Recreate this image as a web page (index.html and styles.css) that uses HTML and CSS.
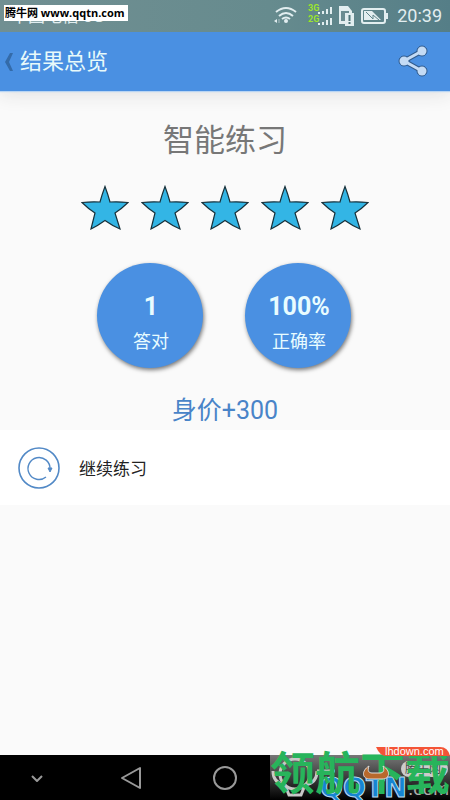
FILE: index.html
```html
<!DOCTYPE html>
<html lang="zh-CN">
<head>
<meta charset="utf-8">
<meta name="viewport" content="width=device-width, initial-scale=1">
<title>结果总览</title>
<link rel="stylesheet" href="styles.css">
</head>
<body>
<div class="status">
  <span class="carrier">中国电信 3G</span>
  <span class="site-tag">腾牛网 www.qqtn.com</span>
  <svg class="signals" width="120" height="32" viewBox="0 0 120 32" aria-hidden="true">
    <g fill="none" stroke="#e2eef0" stroke-width="2">
      <path d="M7 12Q17 4 27 12M10 16Q17 10 24 16M13 19Q17 16 21 19"/>
    </g>
    <circle cx="17" cy="21" r="2" fill="#e2eef0"/>
    <path d="M5 21l3-2v4z" fill="#e2eef0"/>
    <path d="M10 19v4" stroke="#a9bfc2"/>
    <g class="net"><text x="39" y="11">3G</text><text x="39" y="22">2G</text></g>
    <path d="M50 14v-2M54 14v-3M58 14V9M62 14V7M50 25v-2M54 25v-3M58 25v-5M62 25v-7" stroke="#e2eef0" stroke-width="2"/>
    <path d="M70 6h9l4 5v13H70z" fill="#e2eef0"/>
    <path d="M72 11h8v2h-4v8h-4z" fill="#6b8d92"/>
    <path d="M76 13h9v13h-9z" fill="#e2eef0"/>
    <path d="M80.500 15v6M80.500 22v2" stroke="#4f767b" stroke-width="2"/>
    <rect x="93" y="9" width="23" height="14" rx="2" fill="none" stroke="#e2eef0" stroke-width="2"/>
    <path d="M118 13v6" stroke="#e2eef0" stroke-width="2"/>
    <path d="M95 11h8l9 9H95z" fill="#e2eef0"/>
    <path d="M97 12l7 7v-4l6 5" fill="none" stroke="#5f858a"/>
  </svg>
  <span class="clock">20:39</span>
</div>
<header class="bar">
  <button class="back" type="button" aria-label="返回">
    <svg width="10" height="20" viewBox="0 0 10 20"><path d="M8 1H5L0 10l5 9h3L4 10z" fill="#346ba9"/></svg>
  </button>
  <h1>结果总览</h1>
  <button class="share" type="button" aria-label="分享">
    <svg width="32" height="34" viewBox="0 0 32 34">
      <g stroke="#315b8c" fill="#315b8c"><path d="M25 6L7 16l18 10" fill="none" stroke-width="5"/><circle cx="25" cy="6" r="5"/><circle cx="7" cy="16" r="5"/><circle cx="25" cy="26" r="5"/></g>
      <g fill="#c4dbf5"><path d="M25 6L7 16l18 10" fill="none" stroke="#c4dbf5" stroke-width="3"/><circle cx="25" cy="6" r="4.500"/><circle cx="7" cy="16" r="4.500"/><circle cx="25" cy="26" r="4.500"/></g>
    </svg>
  </button>
</header>
<main>
  <h2>智能练习</h2>
  <svg width="0" height="0" class="defs" aria-hidden="true"><symbol id="star" viewBox="0 0 48 45"><path d="M24 1Q27 9 29 16.500Q38 16 47 17Q41 23 34 27.500L39 43.500Q31 40 24 35Q17 40 10 43.500L14 27.500Q7 23 1 17Q10 16 19 16.500Q21 9 24 1Z" fill="#33b5e5" stroke="#17313b" stroke-width="1.200"/></symbol></svg>
  <div class="stars" role="img" aria-label="五星">
    <svg><use href="#star"/></svg><svg><use href="#star"/></svg><svg><use href="#star"/></svg><svg><use href="#star"/></svg><svg><use href="#star"/></svg>
  </div>
  <div class="scores">
    <div class="score"><strong>1</strong><span>答对</span></div>
    <div class="score"><strong>100%</strong><span>正确率</span></div>
  </div>
  <p class="worth">身价+300</p>
  <button class="again" type="button">
    <svg width="44" height="44" viewBox="0 0 44 44" fill="none" stroke="#5289c6" aria-hidden="true">
      <circle cx="22" cy="22" r="20" stroke-width="1.600"/>
      <path d="M29 31A11 11 0 1 1 33 23" stroke-width="1.400"/>
      <path d="M31 22h4l-2 4z" fill="#5289c6" stroke-width="1"/>
    </svg>
    <span>继续练习</span>
  </button>
</main>
<footer>
  <nav>
    <button type="button" aria-label="收起"><svg width="24" height="24" viewBox="0 0 24 24"><path d="M7 10l5 5 5-5" stroke-width="2"/></svg></button>
    <button type="button" aria-label="返回"><svg width="24" height="26" viewBox="0 0 24 26"><path d="M21 3v20L3 13z"/></svg></button>
    <button type="button" aria-label="主页"><svg width="26" height="26" viewBox="0 0 26 26"><circle cx="13" cy="13" r="11"/></svg></button>
  </nav>
  <div class="watermark">
    <svg width="180" height="56" viewBox="0 0 180 56">
      <defs><linearGradient id="shade" x2="0" y2="1"><stop stop-color="#777"/><stop offset="1" stop-color="#000"/></linearGradient></defs>
      <path d="M0 11h180v45H0z" fill="url(#shade)"/>
      <g fill="none" stroke="#c8c8c8" stroke-width="3"><circle cx="25" cy="30" r="15"/><path d="M3 27q0 12 12 14l4 10h12l4-10q12-2 12-14M47 27h18"/></g>
      <rect x="131" y="17" width="47" height="16" rx="8" fill="#ccc"/>
      <text class="tag-name" x="135" y="29">腾牛网</text>
      <text class="logo" x="50" y="53">QQTN</text>
      <text class="dotcom" x="138" y="51">.com</text>
      <text class="mark" x="0" y="46">领航下载</text>
      <path d="M99 22c-8 5-7 13 1 13h12c8 0 9-8 1-13 2 5 0 7-3 7h-8c-3 0-5-2-3-7z" fill="#b8692c" stroke="#ddd"/>
      <path d="M106 3h64q8 0 10 9h-64q-6 0-10-9z" fill="#f45436"/>
      <text class="url" x="115" y="11">lhdown.com</text>
    </svg>
  </div>
</footer>
</body>
</html>
```

FILE: styles.css
```css
* { box-sizing: border-box; }
body {
  margin: 0;
  min-height: 100vh;
  display: flex;
  flex-direction: column;
  background: #fafafa;
  font-family: Roboto, "Noto Sans CJK SC", sans-serif;
}
button {
  border: 0;
  padding: 0;
  background: none;
  font: inherit;
  color: inherit;
}
svg { display: block; flex: none; }
h1, h2, p { margin: 0; font-weight: 400; }
.status {
  position: relative;
  height: 32px;
  display: flex;
  align-items: center;
  justify-content: flex-end;
  gap: 8px;
  padding-right: 8px;
  overflow: hidden;
  background: linear-gradient(90deg, #718f92, #668b8e 60%, #557e87);
  color: #e2eef0;
}
.carrier {
  position: absolute;
  left: 11px;
  top: 7px;
  font-size: 17px;
  line-height: 18px;
}
.site-tag {
  position: absolute;
  left: 4px;
  top: 5px;
  padding: 0 3px 0 1px;
  background: #fff;
  color: #000;
  font: 700 11px/16px "Open Sans", "Noto Sans CJK SC", sans-serif;
}
.net text { fill: #9be52d; font: 700 9px Roboto, sans-serif; }
.clock { font-size: 18px; line-height: 32px; }
.bar {
  height: 59px;
  display: flex;
  align-items: center;
  padding: 0 21px 0 5px;
  background: #4a90e2;
  color: #e8fafa;
  box-shadow: 0 1px 1px #b9d5f3, 0 2px 20px #ddd;
}
.back { width: 15px; }
.bar h1 { flex: 1; font-size: 22px; line-height: 32px; }
main { flex: 1; }
h2 {
  padding-top: 28px;
  color: #777;
  font-size: 31px;
  line-height: 44px;
  text-align: center;
}
.defs { position: absolute; }
.stars {
  display: flex;
  justify-content: center;
  gap: 12px;
  margin-top: 22px;
}
.stars svg { width: 48px; height: 46px; }
.scores {
  display: flex;
  justify-content: center;
  gap: 42px;
  margin-top: 32px;
  padding-right: 2px;
}
.score {
  width: 106px;
  height: 105px;
  display: flex;
  flex-direction: column;
  align-items: center;
  padding: 28px 0 0 2px;
  gap: 6px;
  border-radius: 50%;
  background: #4a90e2;
  color: #e8fcff;
  box-shadow: 1px 2px 4px #777;
}
.score strong { font-size: 25px; line-height: 32px; }
.score span { font-size: 18px; line-height: 26px; }
.worth {
  margin-top: 24px;
  color: #4984c8;
  font-size: 25px;
  line-height: 38px;
  text-align: center;
}
.again {
  width: 100%;
  height: 75px;
  display: flex;
  align-items: center;
  gap: 18px;
  padding: 0 17px;
  background: #fff;
  color: #222;
  font-size: 17px;
}
footer {
  position: relative;
  height: 45px;
  background: #000;
}
nav {
  width: 56%;
  height: 45px;
  display: flex;
  align-items: center;
  justify-content: space-between;
  padding: 0 14px 0 25px;
}
nav svg { fill: none; stroke: #999; stroke-width: 2; stroke-linejoin: round; }
.watermark {
  position: absolute;
  right: 0;
  bottom: 0;
}
.tag-name { fill: #444; font: 12px "Noto Sans CJK SC", sans-serif; }
.logo { fill: #1685d2; stroke: #bcdcf0; stroke-width: 1px; font: 700 27px "DejaVu Sans", sans-serif; }
.dotcom { fill: #aaa; font: 19px "Liberation Sans", sans-serif; }
.url { fill: #fff; font: 11px "Liberation Sans", sans-serif; }
.mark { fill: #27b45b; font: 700 45px "Noto Sans CJK SC", sans-serif; }
```
